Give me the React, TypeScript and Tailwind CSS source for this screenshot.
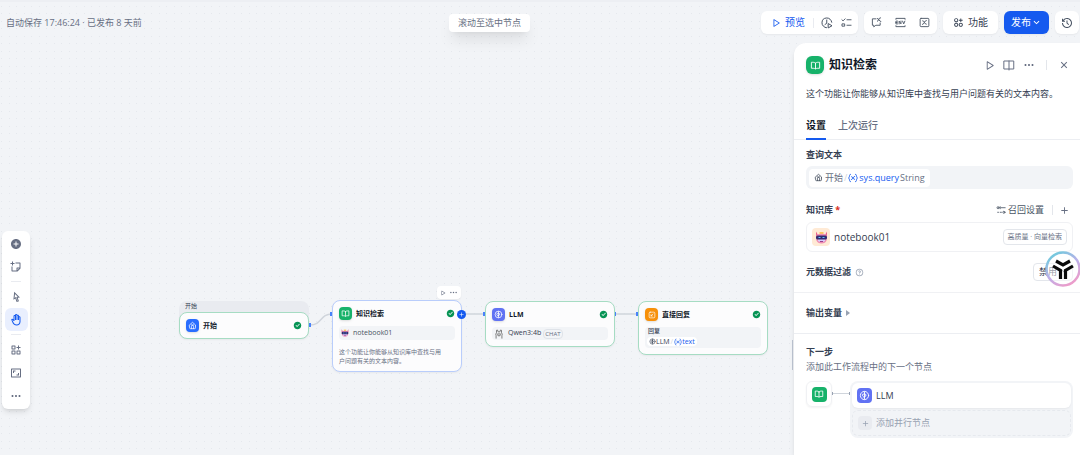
import { useState, type ReactNode } from 'react';
import {
  RiAddCircleFill,
  RiAddLine,
  RiApps2AddLine,
  RiArrowDownSLine,
  RiAspectRatioLine,
  RiCheckboxCircleFill,
  RiCloseLine,
  RiCursorLine,
  RiFunctionAddLine,
  RiHand,
  RiHistoryLine,
  RiMoreFill,
  RiPlayLargeLine,
  RiQuestionLine,
  RiStickyNoteAddLine,
} from 'react-icons/ri';

interface IconProps {
  size?: number;
  className?: string;
}

const Svg = ({ size = 12, className = '', children }: IconProps & { children: ReactNode }) => (
  <svg
    width={size}
    height={size}
    viewBox="0 0 24 24"
    fill="none"
    stroke="currentColor"
    strokeWidth="2"
    strokeLinecap="round"
    strokeLinejoin="round"
    className={`shrink-0 ${className}`}
    aria-hidden="true"
  >
    {children}
  </svg>
);

const HomeIcon = (props: IconProps) => (
  <Svg {...props}>
    <path d="M4 10.5 12 3.5l8 7V18a2.5 2.5 0 0 1-2.5 2.5h-11A2.5 2.5 0 0 1 4 18z" />
    <path d="M9 20v-5a3 3 0 0 1 6 0v5M9 10.5h6" />
  </Svg>
);

const BookIcon = (props: IconProps) => (
  <Svg {...props}>
    <path d="M12 7C10.500 5.500 8.500 5 6 5H3v13h4c2 0 3.500.5 5 1.500 1.500-1 3-1.500 5-1.500h4V5h-3c-2.500 0-4.500.5-6 2zM12 7v12" />
  </Svg>
);

const BookSquareIcon = (props: IconProps) => (
  <Svg {...props}>
    <path d="M2.500 4h19v16h-19zM12 4v18" strokeLinejoin="miter" />
  </Svg>
);

const LlmIcon = (props: IconProps) => (
  <Svg {...props}>
    <circle cx="12" cy="12" r="9" />
    <path d="M12 4v16M12 9H9.500a2 2 0 0 0-2 2v1M12 15H9M12 8l3 2v3l-3 2" />
  </Svg>
);

const AnswerIcon = (props: IconProps) => (
  <Svg {...props}>
    <rect x="3.500" y="3.500" width="17" height="17" rx="3" />
    <path d="m9 15 6-6M9 11v4h4" />
  </Svg>
);

const ClockPlayIcon = (props: IconProps) => (
  <Svg {...props}>
    <path d="M21.500 10.500A9.800 9.800 0 1 0 11 21.500M11.500 6v6.500L8 15" />
    <path d="m15 13.500 7 4-7 4z" />
  </Svg>
);

const ChecklistIcon = (props: IconProps) => (
  <Svg {...props}>
    <path d="M13 6h9M13 18h9M2 6l2.500 2.500L9 4M3 15h5v5H3z" />
  </Svg>
);

const BubbleXIcon = (props: IconProps) => (
  <Svg {...props}>
    <path d="M11 4H3v14h3v3.500L10.500 18H20v-5" />
    <path d="M14 10c2 0 2.500-8 6-8h1M14 3c3-1 4 8 7.500 7" />
  </Svg>
);

const EnvIcon = (props: IconProps) => (
  <Svg {...props}>
    <path d="M2 5V3h20v2M2 19v2h20v-2" />
    <path d="M5.500 9H2v6h3.500M2 12h3M9 15V9l4 6V9M16.500 9l2.500 6 2.500-6" />
  </Svg>
);

const BoxXIcon = (props: IconProps) => (
  <Svg {...props}>
    <rect x="2.500" y="3" width="19" height="18" rx="2" />
    <path d="M7.500 16.500C11.500 17 11.500 7 16 7.500M8 8c4-1 4 9 8 8" />
  </Svg>
);

const RecallIcon = (props: IconProps) => (
  <Svg {...props}>
    <circle cx="5" cy="6.500" r="2.500" />
    <circle cx="19" cy="17.500" r="2.500" />
    <path d="M12 6.500h10M10 4v5M4 17.500h2M10 17.500h3" />
  </Svg>
);

const VarIcon = (props: IconProps) => (
  <Svg {...props}>
    <path d="M6 3C2 3 5 9 1.500 12 5 15 2 21 6 21M18 3c4 0 1 6 4.500 9-3.500 3-.500 9-4.500 9" />
    <path d="M8 16c4 .500 4-8.500 8-8M8.500 8.500C12 7.500 12 17 16 15.500" />
  </Svg>
);

const RobotAvatar = ({ size = 13, className = '' }: IconProps) => (
  <svg width={size} height={size} viewBox="0 0 26 26" className={`shrink-0 ${className}`} aria-hidden="true">
    <path d="M2 1v9h5zM24 1v9h-5z" fill="#e85d88" />
    <path d="M9 2h8v5H9z" fill="#ffc85c" />
    <path d="M3 7q10-3 20 0v12q-2 6-10 6T3 19z" fill="#ef8eb4" />
    <path d="M6 15h14v5q-7 4-14 0z" fill="#d6ccfa" />
    <rect x="2" y="9" width="22" height="8" rx="3" fill="#352b70" />
    <path d="M7 13h4M15 13h4" stroke="#5bc9ff" strokeWidth="2" />
    <path d="M10 21h6" stroke="#9a3e89" strokeWidth="2" />
  </svg>
);

const LlamaIcon = () => (
  <svg width="10" height="10" viewBox="0 0 24 24" fill="none" stroke="#666" strokeWidth="2" className="shrink-0" aria-hidden="true">
    <path d="M5 23v-7q-2-4 1-7V3q3-3 4 4h4q1-7 4-4v6q3 3 1 7v7" />
    <ellipse cx="12" cy="14" rx="3.500" ry="2.500" />
    <path d="M8 11h1M15 11h1" />
  </svg>
);

const DotGrid = () => (
  <svg className="absolute inset-0 h-full w-full" aria-hidden="true">
    <defs>
      <pattern id="dots" x="1" y="-2" width="15" height="15" patternUnits="userSpaceOnUse">
        <path d="M0 0h1v1H0zM8 0h1v1H8zM0 8h1v1H0zM8 8h1v1H8z" fill="#e5e8ed" />
      </pattern>
    </defs>
    <rect width="100%" height="100%" fill="url(#dots)" />
  </svg>
);

const Edges = () => (
  <svg className="absolute inset-0 h-full w-full" aria-hidden="true">
    <path d="M310 325C322 325 320 314 332 314M462 314H485M614 314H638" fill="none" stroke="#d0d5dc" strokeWidth="1.500" />
    <path d="M309 323h2v4h-2zM330 312h2v4h-2zM483 312h2v4h-2zM614 312h2v4h-2zM636 312h2v4h-2z" fill="#4a83fb" />
  </svg>
);

interface NodeProps {
  title: string;
  icon: ReactNode;
  iconClass: string;
  className: string;
  children?: ReactNode;
}

const FlowNode = ({ title, icon, iconClass, className, children }: NodeProps) => (
  <div className={`w-[130px] rounded-lg border bg-[#fcfcfd] px-1.5 pt-1.5 shadow-xs ${className}`}>
    <div className="flex items-center gap-1">
      <span className={`flex size-[13px] items-center justify-center rounded text-white shadow-sm ${iconClass}`}>{icon}</span>
      <h3 className="flex-1 text-[7px] leading-[13px] font-bold text-[#101828]">{title}</h3>
      <RiCheckboxCircleFill size={9} className="text-[#079455]" />
    </div>
    {children}
  </div>
);

const Canvas = () => (
  <main className="absolute inset-0">
    <DotGrid />
    <Edges />

    <section className="absolute top-[301px] left-[179px] rounded-lg bg-[#e9ebf0]">
      <p className="px-1.5 text-[6px] leading-[11px] text-[#354052]">开始</p>
      <FlowNode title="开始" icon={<HomeIcon size={9} />} iconClass="bg-[#296dff]" className="h-[27px] border-[#a6dcc3]" />
    </section>

    <div className="absolute top-[286px] left-[437px] flex h-[13px] w-6 items-center justify-around rounded bg-white px-0.5 text-[#676f83] shadow-xs">
      <button type="button" aria-label="运行此步骤"><RiPlayLargeLine size={6} /></button>
      <button type="button" aria-label="更多"><RiMoreFill size={9} /></button>
    </div>
    <FlowNode
      title="知识检索"
      icon={<BookIcon size={9} />}
      iconClass="bg-[#17b26a]"
      className="absolute top-[300px] left-[332px] h-[72px] border-[#b9cdfb]"
    >
      <div className="mt-1.5 flex h-3.5 items-center gap-1 rounded bg-[#f2f4f7] px-0.5">
        <RobotAvatar size={8} />
        <span className="text-[7px] text-[#495464]">notebook01</span>
      </div>
      <p className="mt-2 text-[6px] leading-[9px] text-[#676f83]">
        这个功能让你能够从知识库中查找与用<br />户问题有关的文本内容。
      </p>
    </FlowNode>
    <button
      type="button"
      aria-label="添加节点"
      className="absolute top-[310px] left-[457px] flex size-[9px] items-center justify-center rounded-full bg-[#155aef] text-white"
    >
      <RiAddLine size={7} />
    </button>

    <FlowNode
      title="LLM"
      icon={<LlmIcon size={9} />}
      iconClass="bg-[#6172f3]"
      className="absolute top-[301px] left-[485px] h-[46px] border-[#a6dcc3]"
    >
      <div className="mt-1.5 flex h-[13px] items-center gap-1 rounded bg-[#f2f4f7] px-0.5">
        <LlamaIcon />
        <span className="text-[7px] text-[#354052]">Qwen3:4b</span>
        <span className="-ml-0.5 rounded-sm border border-[#dfe3e9] px-px text-[6px] leading-[8px] text-[#676f83]">CHAT</span>
      </div>
    </FlowNode>

    <FlowNode
      title="直接回复"
      icon={<AnswerIcon size={8} />}
      iconClass="bg-[#f79009]"
      className="absolute top-[301px] left-[638px] h-[54px] border-[#a6dcc3]"
    >
      <div className="mt-1.5 flex h-[21px] flex-col items-start gap-px rounded bg-[#f2f4f7] px-0.5">
        <span className="px-px text-[6px] leading-[9px] font-medium text-[#354052]">回复</span>
        <span className="flex items-center rounded-sm bg-white px-0.5 text-[7px] leading-[9px] text-[#354052]">
          <LlmIcon size={7} />LLM<span className="mx-px text-[#d0d5dc]">/</span>
          <VarIcon size={8} className="text-[#155aef]" />
          <span className="text-[#155aef]">text</span>
        </span>
      </div>
    </FlowNode>
  </main>
);

const HeaderGroup = ({ children, className }: { children: ReactNode; className: string }) => (
  <div className={`flex h-[23px] items-center rounded-md bg-white text-[#495464] shadow-xs ${className}`}>{children}</div>
);

const Header = () => (
  <header className="relative flex h-[43px] shrink-0 items-center border-t-2 border-[#edeff3] pr-px">
    <p className="w-[449px] pl-1.5 text-[9px] text-[#676f83]">自动保存 17:46:24 · 已发布 8 天前</p>
    <button type="button" className="h-[18px] w-[81px] rounded bg-white text-[9px] text-[#676f83] shadow-lg">
      滚动至选中节点
    </button>
    <div className="ml-auto flex items-center gap-1.5">
      <HeaderGroup className="w-[97px] justify-between pr-1.5 pl-2.5">
        <button type="button" className="flex items-center gap-1 text-[10px] text-[#155aef]">
          <RiPlayLargeLine size={10} />预览
        </button>
        <span className="h-2.5 w-px bg-[#e9ebf0]" />
        <button type="button" aria-label="运行历史"><ClockPlayIcon /></button>
        <button type="button" aria-label="检查清单"><ChecklistIcon size={11} /></button>
      </HeaderGroup>
      <HeaderGroup className="w-[73px] justify-around">
        <button type="button" aria-label="会话变量"><BubbleXIcon size={11} /></button>
        <button type="button" aria-label="环境变量"><EnvIcon size={11} /></button>
        <button type="button" aria-label="系统变量"><BoxXIcon size={11} /></button>
      </HeaderGroup>
      <HeaderGroup className="w-[55px] justify-center">
        <button type="button" className="flex items-center gap-1 text-[10px] text-[#354052]">
          <RiApps2AddLine size={11} />功能
        </button>
      </HeaderGroup>
      <button type="button" className="flex h-[23px] w-[45px] items-center justify-center rounded-md bg-[#155aef] text-[10px] text-white shadow-xs">
        发布<RiArrowDownSLine size={11} />
      </button>
      <HeaderGroup className="w-6 justify-center">
        <button type="button" aria-label="版本历史"><RiHistoryLine size={12} /></button>
      </HeaderGroup>
    </div>
  </header>
);

const Toolbar = () => {
  const [mode, setMode] = useState('hand');
  const item = 'flex size-[23px] items-center justify-center rounded-md';
  const active = 'bg-[#e9effe] text-[#155aef]';

  return (
    <nav className="relative mb-[46px] ml-0.5 flex w-7 flex-col items-center self-end rounded-md bg-white pt-px pb-0.5 text-[#676f83] shadow-md">
      <button type="button" aria-label="添加节点" className={item}><RiAddCircleFill size={12} /></button>
      <button type="button" aria-label="添加注释" className={item}><RiStickyNoteAddLine size={12} /></button>
      <hr className="my-[3px] w-2.5 border-[#e9ebf0]" />
      <button type="button" aria-label="指针模式" onClick={() => setMode('pointer')} className={`${item} ${mode === 'pointer' ? active : ''}`}>
        <RiCursorLine size={12} />
      </button>
      <button type="button" aria-label="手模式" onClick={() => setMode('hand')} className={`${item} ${mode === 'hand' ? active : ''}`}>
        <RiHand size={12} />
      </button>
      <hr className="my-[3px] w-2.5 border-[#e9ebf0]" />
      <button type="button" aria-label="整理节点" className={item}><RiFunctionAddLine size={12} /></button>
      <button type="button" aria-label="最大化画布" className={item}><RiAspectRatioLine size={12} /></button>
      <button type="button" aria-label="更多" className={item}><RiMoreFill size={12} /></button>
    </nav>
  );
};

const AssistantBadge = () => (
  <button type="button" aria-label="助手" className="absolute -top-3 -right-2">
    <svg width="36" height="36" viewBox="0 0 36 36" aria-hidden="true">
      <defs>
        <linearGradient id="ring" x1="0.200" y1="0" x2="0.800" y2="1">
          <stop offset="0" stopColor="#6ccbdc" />
          <stop offset="0.500" stopColor="#bdb0ea" />
          <stop offset="1" stopColor="#f29ac6" />
        </linearGradient>
      </defs>
      <circle cx="18" cy="18" r="16.500" fill="#fff" fillOpacity="0.500" stroke="url(#ring)" strokeWidth="2.500" />
      <g fill="none" stroke="#0a0a0a" strokeWidth="3.200">
        <path d="m11 10 7 4 7-4" />
        <path d="m8 15 7.500 4.500V28" />
        <path d="m28 15-7.500 4.500V28" />
      </g>
    </svg>
  </button>
);

const Panel = () => {
  const [tab, setTab] = useState('settings');
  const tabClass = (name: string) =>
    tab === name ? 'border-[#155aef] font-bold text-[#101828]' : 'border-transparent font-medium text-[#676f83]';

  return (
    <aside className="relative w-[286px] shrink-0 rounded-tl-xl bg-white text-[9px] text-[#354052] shadow-md">
      <span className="absolute top-[297px] -left-0.5 h-[30px] w-px bg-[#b8bfcc]" />

      <div className="flex items-center pt-[13px] pr-2.5 pl-3">
        <span className="flex size-[18px] items-center justify-center rounded-md bg-[#17b26a] text-white shadow-sm">
          <BookIcon size={11} />
        </span>
        <h2 className="ml-[5px] flex-1 text-[12px] leading-[18px] font-bold text-[#101828]">知识检索</h2>
        <div className="flex items-center gap-2 text-[#676f83]">
          <button type="button" aria-label="运行此步骤"><RiPlayLargeLine size={11} /></button>
          <button type="button" aria-label="帮助文档"><BookSquareIcon size={12} /></button>
          <button type="button" aria-label="更多"><RiMoreFill size={12} /></button>
          <span className="mx-[3px] h-2.5 w-px bg-[#e3e6eb]" />
          <button type="button" aria-label="关闭"><RiCloseLine size={12} /></button>
        </div>
      </div>
      <p className="mt-3 px-3 leading-4 whitespace-nowrap">这个功能让你能够从知识库中查找与用户问题有关的文本内容。</p>

      <div role="tablist" className="mt-[15px] flex gap-3 border-b border-[#eceef2] px-3 text-[10px]">
        <button type="button" role="tab" aria-selected={tab === 'settings'} onClick={() => setTab('settings')} className={`-mb-px h-[23px] border-b-2 pb-1 ${tabClass('settings')}`}>
          设置
        </button>
        <button type="button" role="tab" aria-selected={tab === 'last'} onClick={() => setTab('last')} className={`-mb-px h-[23px] border-b-2 pb-1 ${tabClass('last')}`}>
          上次运行
        </button>
      </div>

      <section className="pt-2 pr-[7px] pl-3">
        <h3 className="leading-[14px] font-bold">查询文本</h3>
        <div className="mt-1 flex h-[23px] items-center rounded-md bg-[#f2f4f7] px-[3px]">
          <span className="flex h-[18px] items-center rounded bg-white px-[5px] text-[#676f83]">
            <HomeIcon size={9} className="mr-0.5 text-[#354052]" />开始
            <span className="mx-px text-[#d0d5dc]">/</span>
            <VarIcon size={10} className="mr-px text-[#155aef]" />
            <span className="font-medium text-[#155aef]">sys.query</span>
            <span className="ml-px">String</span>
          </span>
        </div>
      </section>

      <section className="pt-3.5 pr-[7px] pl-3">
        <div className="flex items-center pr-[3px]">
          <h3 className="flex-1 leading-[14px] font-bold">知识库 <span className="text-[#d92d20]">*</span></h3>
          <button type="button" className="flex items-center gap-0.5 text-[#495464]"><RecallIcon size={10} />召回设置</button>
          <span className="mr-1.5 ml-2 h-2.5 w-px bg-[#e3e6eb]" />
          <button type="button" aria-label="添加知识库" className="text-[#676f83]"><RiAddLine size={11} /></button>
        </div>
        <div className="mt-[5px] flex h-[30px] items-center rounded-md border border-[#f0f1f4] px-[5px]">
          <span className="flex size-[18px] items-center justify-center rounded bg-[#ffead5]"><RobotAvatar /></span>
          <span className="ml-1 flex-1 text-[10px]">notebook01</span>
          <span className="rounded border border-[#e3e6eb] px-1 text-[7px] leading-[14px] text-[#676f83]">高质量 · 向量检索</span>
        </div>
      </section>

      <section className="flex items-center border-b border-[#f0f1f4] pt-[11px] pr-[7px] pb-[11px] pl-3">
        <label htmlFor="metadata-filter" className="font-bold">元数据过滤</label>
        <RiQuestionLine size={9} className="ml-1 text-[#98a2b2]" />
        <div className="relative ml-auto">
          <select id="metadata-filter" className="h-[18px] w-10 appearance-none rounded border border-[#e3e6eb] bg-white pl-[5px] text-[9px]">
            <option>禁用</option>
            <option>自动</option>
            <option>手动</option>
          </select>
          <RiArrowDownSLine size={9} className="pointer-events-none absolute top-1 right-1" />
          <AssistantBadge />
        </div>
      </section>

      <section className="border-b border-[#eceef2] px-3 py-[13px]">
        <button type="button" className="flex items-center gap-1 leading-[14px] font-bold">
          输出变量
          <svg width="4" height="6" viewBox="0 0 4 6" fill="#98a2b2" aria-hidden="true"><path d="M0 0l4 3-4 3z" /></svg>
        </button>
      </section>

      <section className="pt-[11px] pr-[7px] pl-3">
        <h3 className="leading-[14px] font-bold">下一步</h3>
        <p className="leading-[15px] text-[#676f83]">添加此工作流程中的下一个节点</p>
        <div className="mt-[7px] flex items-start">
          <span className="flex size-[26px] items-center justify-center rounded-md border border-[#f0f1f4] shadow-xs">
            <span className="flex size-[15px] items-center justify-center rounded bg-[#17b26a] text-white"><BookIcon size={10} /></span>
          </span>
          <svg width="18" height="26" viewBox="0 0 18 26" aria-hidden="true">
            <path d="M0 12.500h18" stroke="#d0d5dc" />
            <path d="M0.500 11v3M17.500 11v3" stroke="#98a2b2" />
          </svg>
          <div className="flex-1 rounded-lg bg-[#f2f4f7] p-0.5">
            <button type="button" className="flex h-[25px] w-full items-center gap-1 rounded-md bg-white px-[5px] shadow-xs">
              <span className="flex size-[15px] items-center justify-center rounded bg-[#6172f3] text-white"><LlmIcon size={11} /></span>
              LLM
            </button>
            <button type="button" className="mt-0.5 flex h-[26px] w-full items-center gap-1 rounded-md border border-dashed border-[#e6e9ee] px-[5px] text-[#98a2b2]">
              <span className="flex size-3.5 items-center justify-center rounded bg-[#e9ebf0]"><RiAddLine size={9} /></span>
              添加并行节点
            </button>
          </div>
        </div>
      </section>
    </aside>
  );
};

export default function App() {
  return (
    <div className="relative flex h-screen flex-col overflow-hidden bg-[#f2f4f7] font-['Open_Sans','Noto_Sans_CJK_SC',sans-serif]">
      <Canvas />
      <Header />
      <div className="pointer-events-none flex min-h-0 flex-1 justify-between *:pointer-events-auto">
        <Toolbar />
        <Panel />
      </div>
    </div>
  );
}
